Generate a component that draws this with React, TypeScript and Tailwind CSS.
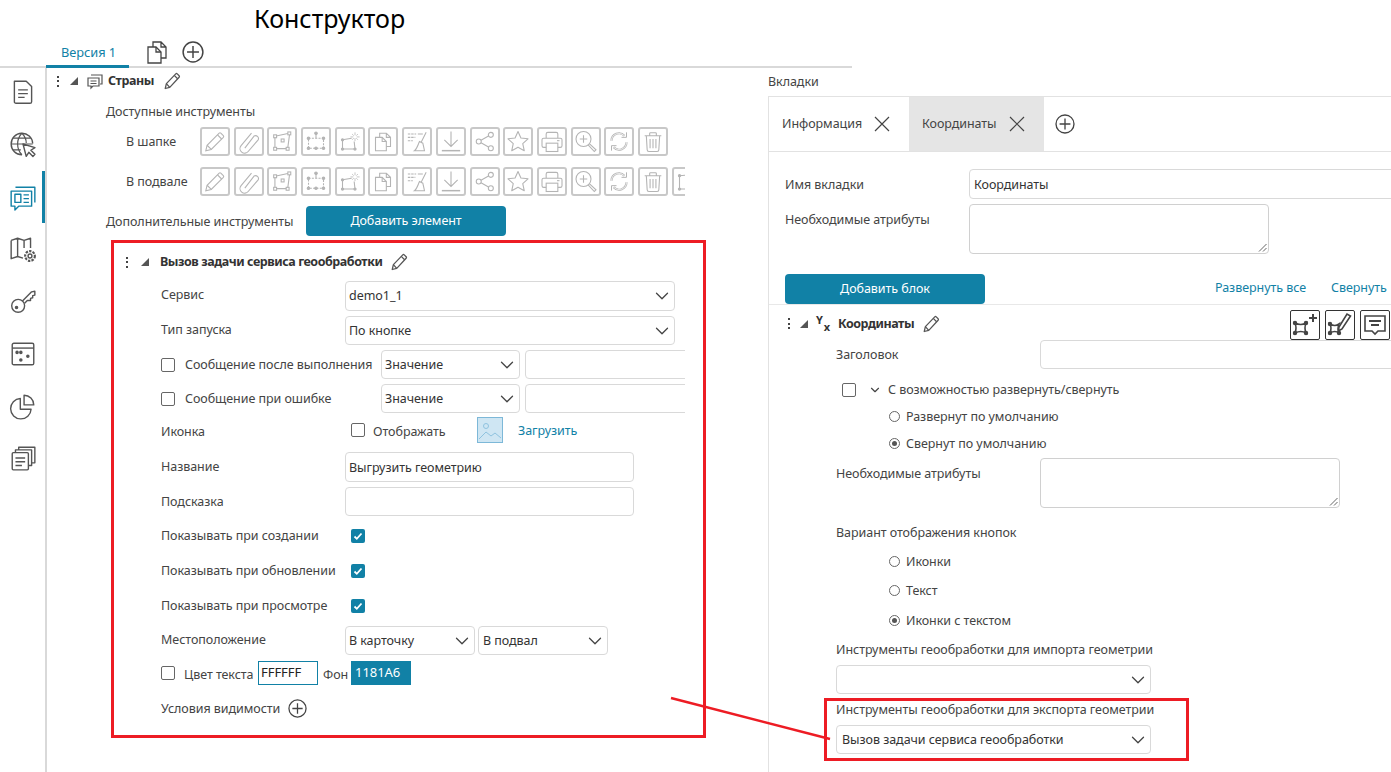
import { ChevronDown } from "lucide-react";
import type { ReactNode } from "react";

const FONT = "font-['Noto_Sans','Open_Sans',sans-serif]";

function Plus({ size = 18 }: { size?: number }) {
  return (
    <svg width={size} height={size} viewBox="0 0 24 24" fill="none" stroke="#444" strokeWidth="1.6" className="shrink-0">
      <circle cx="12" cy="12" r="10.8" />
      <path d="M12 5.5v13M5.5 12h13" />
    </svg>
  );
}

function Pencil({ size = 18, color = "#555" }: { size?: number; color?: string }) {
  return (
    <svg width={size} height={size} viewBox="0 0 24 24" fill="none" stroke={color} strokeWidth="1.7" strokeLinejoin="round" className="shrink-0">
      <path d="M3 22l1.5-6.500L17 2.500a1.500 1.500 0 0 1 2 0l2.500 2.500a1.500 1.500 0 0 1 0 2L9 20.500z" />
      <path d="M4.500 15.500L9 20.500M15 4.500l4.500 4.500" />
    </svg>
  );
}

function Dots() {
  return (
    <span className="flex flex-col gap-[2.500px] shrink-0">
      <i className="block w-[2px] h-[2px] bg-[#444]" />
      <i className="block w-[2px] h-[2px] bg-[#444]" />
      <i className="block w-[2px] h-[2px] bg-[#444]" />
    </span>
  );
}

function Tri() {
  return (
    <svg width="8" height="8" viewBox="0 0 8 8" className="block">
      <path d="M8 0v8H0z" fill="#555" />
    </svg>
  );
}

function Select({ text, className }: { text?: string; className: string }) {
  return (
    <div className={`flex items-center justify-between border border-[#d9d9d9] rounded-[4px] pr-[1px] bg-white shrink-0 ${className}`}>
      <span className="text-[#333] whitespace-nowrap">{text}</span>
      <ChevronDown size={22} strokeWidth={1.4} color="#444" />
    </div>
  );
}

function Check({ on }: { on?: boolean }) {
  if (on) {
    return (
      <span className="flex items-center justify-center w-[14px] h-[14px] rounded-[2px] bg-[#1181a6] shrink-0">
        <svg width="10" height="10" viewBox="0 0 10 10" fill="none" stroke="#fff" strokeWidth="1.8">
          <path d="M1.500 5.500l2.300 2.300 4.700-5.300" />
        </svg>
      </span>
    );
  }
  return <span className="block w-[14px] h-[14px] rounded-[2px] border border-[#666] bg-white shrink-0" />;
}

function Radio({ on, label, className }: { on?: boolean; label: string; className: string }) {
  return (
    <div className={`flex items-center pl-[120px] h-[20px] ${className}`}>
      <span className="flex items-center justify-center w-[11px] h-[11px] rounded-full border border-[#666] shrink-0">
        {on && <i className="block w-[5px] h-[5px] rounded-full bg-[#555]" />}
      </span>
      <span className="ml-[6px] mt-[2px]">{label}</span>
    </div>
  );
}

const g = "#b4b4b4";

const toolIcons: ReactNode[] = [
  <>
    <path d="M4 26l1.500-6.500L20 5a1.500 1.500 0 0 1 2 0l3 3a1.500 1.500 0 0 1 0 2L10.500 24.500z" />
    <path d="M5.500 19.500l5 5M18 7l5 5" />
  </>,
  <path d="M10 23L21 8.500a3.500 3.500 0 0 1 5 4.500L14 27a5.500 5.500 0 0 1-8.500-7L18 5" />,
  <>
    <path d="M8 8.500l14-3M24 7l-2 15M8 23.500h12M6.500 10v12" />
    <rect x="5" y="7" width="3.500" height="3.500" />
    <rect x="22" y="3.500" width="3.500" height="3.500" />
    <rect x="5" y="22" width="3.500" height="3.500" />
    <rect x="20" y="22" width="3.500" height="3.500" />
    <rect x="14" y="12" width="3.500" height="3.500" />
  </>,
  <>
    <rect x="6" y="11" width="18" height="12" strokeDasharray="2.500 1.500" />
    <path d="M15 11V6" />
    <circle cx="15" cy="5" r="1.500" fill={g} />
    <circle cx="6" cy="11" r="1.500" fill={g} />
    <circle cx="24" cy="11" r="1.500" fill={g} />
    <circle cx="6" cy="23" r="1.500" fill={g} />
    <circle cx="15" cy="23" r="1.500" fill={g} />
    <circle cx="24" cy="23" r="1.500" fill={g} />
  </>,
  <>
    <path d="M6 13l11-2M6 13v11M6 24h15l-1-9" />
    <circle cx="6" cy="13" r="1.300" fill={g} />
    <circle cx="6" cy="24" r="1.300" fill={g} />
    <circle cx="21" cy="24" r="1.300" fill={g} />
    <path d="M21 4v3.500M21 11v3.500M15.500 9.500H19M23 9.500h3.500M17.500 6l2 2M24.500 6l-2 2M17.500 13l2-2M24.500 13l-2-2" strokeWidth="0.900" />
  </>,
  <>
    <path d="M6 10h8l5 5v11H6z" />
    <path d="M14 10v5h5M11 10V5h8l5 5v11h-5M19 5v5h5" />
  </>,
  <>
    <path d="M4 6h10M4 10h9M4 14h6" strokeDasharray="3 1" />
    <path d="M16 6h6M26 4l-6 12" />
    <path d="M18 15l4 2 2 9H12c3-2 4-7 6-11z" />
  </>,
  <>
    <path d="M15 3v17M7 13l8 8 8-8" />
    <path d="M4 26h22" strokeWidth="1.800" />
  </>,
  <>
    <circle cx="7.500" cy="15" r="3" />
    <circle cx="22" cy="7" r="3" />
    <circle cx="22" cy="23" r="3" />
    <path d="M10.200 13.500l9-5M10.200 16.500l9 5" />
  </>,
  <path d="M15 3l3.500 7.800 8.500 1-6.300 5.700 1.800 8.500L15 21.800 7.500 26l1.800-8.500L3 11.800l8.500-1z" strokeLinejoin="round" />,
  <>
    <path d="M8 11V6a2 2 0 0 1 2-2h10a2 2 0 0 1 2 2v5M8 22H5a2 2 0 0 1-2-2v-7a2 2 0 0 1 2-2h20a2 2 0 0 1 2 2v7a2 2 0 0 1-2 2h-3" />
    <rect x="8" y="17" width="14" height="10" />
    <path d="M21 14h3" />
  </>,
  <>
    <circle cx="12" cy="12" r="9" />
    <path d="M12 7.500v9M7.500 12h9" />
    <path d="M19 17.500l8 7.500-2 2-7.500-8" />
  </>,
  <>
    <path d="M6 14a9 9 0 0 1 15.500-6M24 16a9 9 0 0 1-15.500 6" strokeWidth="2.600" />
    <path d="M6 14a9 9 0 0 1 15.500-6M24 16a9 9 0 0 1-15.500 6" stroke="#fff" strokeWidth="0.900" />
    <path d="M24 4v6h-6M6 26v-6h6" strokeWidth="1.200" />
  </>,
  <>
    <path d="M5 8h20M11 8V5.500a1 1 0 0 1 1-1h6a1 1 0 0 1 1 1V8M7 8l1 17a2 2 0 0 0 2 2h10a2 2 0 0 0 2-2l1-17M11.500 12v11M15 12v11M18.500 12v11" />
  </>,
  <>
    <path d="M6 8l12-1M6 8v16M6 24h16" />
    <circle cx="6" cy="8" r="1.300" fill={g} />
    <circle cx="6" cy="24" r="1.300" fill={g} />
  </>,
];

function ToolRow({ count, label, className }: { count: number; label: string; className: string }) {
  return (
    <div className={`flex items-center h-[29px] ${className}`}>
      <span className="w-[94px] pl-[20px] shrink-0">{label}</span>
      <div className="flex gap-[3.700px]">
        {toolIcons.slice(0, count).map((icon, i) => (
          <span key={i} className="flex items-center justify-center w-[30px] h-[29px] border-2 border-[#c8c8c8] rounded-[3px] shrink-0">
            <svg width="26" height="25" viewBox="0 0 30 30" fill="none" stroke={g} strokeWidth="1.300">
              {icon}
            </svg>
          </span>
        ))}
      </div>
    </div>
  );
}

function BoxIcon({ children }: { children: ReactNode }) {
  return (
    <span className="flex items-center justify-center w-[30px] h-[30px] border border-[#333] rounded-[2px] bg-white shrink-0">
      <svg width="28" height="28" viewBox="0 0 28 28" fill="none" stroke="#444" strokeWidth="1.600">
        {children}
      </svg>
    </span>
  );
}

function NavIcon({ children, className }: { children: ReactNode; className: string }) {
  return (
    <div className={`flex items-center justify-center h-[52.300px] ${className}`}>
      <svg width="28" height="28" viewBox="0 0 26 26" fill="none" stroke="currentColor" strokeWidth="1.300" strokeLinejoin="round">
        {children}
      </svg>
    </div>
  );
}

function Sidebar() {
  return (
    <aside className="w-[47px] shrink-0 border-r-2 border-[#d9d9d9] text-[#555]">
      <NavIcon className="-mt-[2px]">
        <path d="M5 3h11l5 5v14a1.500 1.500 0 0 1-1.500 1.500h-13A1.500 1.500 0 0 1 5 22z" />
        <path d="M8.500 11h9M8.500 14.500h9M8.500 18h6" />
      </NavIcon>
      <NavIcon className="">
        <path d="M12 23a10 10 0 1 1 10-10.500" />
        <path d="M2 13h20M12 3c-3 3-4 6-4 10s1 7 4 10M12 3c3 3 4 6 4 9M4 7.500h16M4 18.500h7" strokeWidth="1.100" />
        <path d="M13 13l3 11.500 2.400-3.800 3.800 3.800 1.900-1.900-3.800-3.800 3.800-2.400z" fill="#fff" />
      </NavIcon>
      <div className="relative">
        <NavIcon className="text-[#1181a6]">
          <path d="M6 4h18v14M2 7.500h19v14H9l-3.500 3.500v-3.500H2z" fill="#fff" />
          <rect x="5.500" y="10.500" width="5.500" height="7.500" />
          <path d="M13.500 11h5M13.500 14.500h5M13.500 18h5" />
        </NavIcon>
        <span className="absolute right-0 top-0 w-[3px] h-[52px] bg-[#1181a6]" />
      </div>
      <NavIcon className="">
        <path d="M2 5l6-2 6 2 6-2v9M2 5v17l6-2 5 1.500M8 3v17M14 5v7" />
        <circle cx="19.500" cy="19.500" r="1.800" />
        <circle cx="19.500" cy="19.500" r="4.500" strokeDasharray="2.200 1.100" strokeWidth="2" />
      </NavIcon>
      <NavIcon className="">
        <circle cx="8.500" cy="17.500" r="6" />
        <circle cx="7" cy="19" r="1" fill="currentColor" />
        <path d="M12.500 13L21 4.500l3-.5v3.500l-2 .5v2l-2 .5v2h-3l-2.500 2.500" />
      </NavIcon>
      <NavIcon className="">
        <rect x="3" y="3" width="20" height="20" rx="1.500" />
        <path d="M3 7.500h20" />
        <circle cx="7.500" cy="11.500" r="1" fill="currentColor" />
        <circle cx="11" cy="11.500" r="1" fill="currentColor" />
        <circle cx="17.500" cy="15" r="1" fill="currentColor" />
        <circle cx="11" cy="18.500" r="1" fill="currentColor" />
      </NavIcon>
      <NavIcon className="">
        <path d="M10.500 6a9.500 9.500 0 1 0 10 10h-10z" />
        <path d="M14 3a9 9 0 0 1 9 9h-9z" />
      </NavIcon>
      <NavIcon className="">
        <rect x="3" y="8" width="15" height="16" rx="1" />
        <path d="M6 13h9M6 16.500h9M6 20h6" />
        <path d="M6 8V5.500h15V20h-3M9 5.500V3h15v14.500h-3" />
      </NavIcon>
    </aside>
  );
}

function LeftPane() {
  return (
    <section className="w-[638px] shrink-0 overflow-hidden">
      <div className="flex items-center h-[26px] pl-[10px]">
        <Dots />
        <span className="ml-[11px]"><Tri /></span>
        <svg className="ml-[8px] shrink-0" width="18" height="18" viewBox="0 0 18 18" fill="none" stroke="#555" strokeWidth="1.200">
          <path d="M5 3h11v9h-2M2 6h11v8H7l-2 2v-2H2z" fill="#fff" />
          <path d="M4.500 9h6M4.500 11.500h6" />
        </svg>
        <span className="ml-[4px] font-bold text-[#333] tracking-[-0.450px]">Страны</span>
        <span className="ml-[9px]"><Pencil /></span>
      </div>
      <div className="flex items-center h-[26px] mt-[4px] pt-[2px] pl-[59px]">Доступные инструменты</div>
      <div className="pl-[59px]">
        <ToolRow count={14} label="В шапке" className="mt-[3px]" />
        <ToolRow count={15} label="В подвале" className="mt-[11px]" />
        <div className="flex items-center h-[30px] mt-[10px]">
          <span className="w-[200px] shrink-0 mt-[2px]">Дополнительные инструменты</span>
          <button className="w-[200px] h-[30px] bg-[#1181a6] text-white rounded-[4px]">Добавить элемент</button>
        </div>
      </div>
      <div className="flex items-center h-[26px] mt-[12px] pt-[2px] pl-[79px]">
        <Dots />
        <span className="ml-[13px]"><Tri /></span>
        <span className="ml-[11px] font-bold text-[#333] tracking-[-0.450px]">Вызов задачи сервиса геообработки</span>
        <span className="ml-[8px]"><Pencil /></span>
      </div>
      <div className="pl-[114px]">
        <div className="flex items-center h-[30px] mt-[7px]">
          <span className="w-[184px] shrink-0 -mt-[2px]">Сервис</span>
          <Select text="demo1_1" className="w-[330px] h-[30px] pl-[3px]" />
        </div>
        <div className="flex items-center h-[29px] mt-[5px]">
          <span className="w-[184px] shrink-0 -mt-[2px]">Тип запуска</span>
          <Select text="По кнопке" className="w-[330px] h-[29px] pl-[3px]" />
        </div>
        <div className="flex items-center h-[29px] mt-[5px]">
          <Check />
          <span className="ml-[10px] w-[196px] shrink-0 whitespace-nowrap">Сообщение после выполнения</span>
          <Select text="Значение" className="w-[139px] h-[29px] pl-[3px]" />
          <span className="block ml-[5px] w-[200px] h-[29px] border border-[#d9d9d9] rounded-[4px] shrink-0" />
        </div>
        <div className="flex items-center h-[29px] mt-[5px]">
          <Check />
          <span className="ml-[10px] w-[196px] shrink-0">Сообщение при ошибке</span>
          <Select text="Значение" className="w-[139px] h-[29px] pl-[3px]" />
          <span className="block ml-[5px] w-[200px] h-[29px] border border-[#d9d9d9] rounded-[4px] shrink-0" />
        </div>
        <div className="flex items-center h-[26px] mt-[4px]">
          <span className="w-[190px] shrink-0 mt-[3px]">Иконка</span>
          <Check />
          <span className="ml-[8px] w-[104px] shrink-0 mt-[3px]">Отображать</span>
          <svg width="26" height="26" viewBox="0 0 26 26" className="shrink-0">
            <rect x="0.500" y="0.500" width="25" height="25" fill="#cfe6f3" stroke="#7db8d8" />
            <circle cx="9" cy="9" r="2.500" fill="none" stroke="#8fc3df" />
            <path d="M2 22l7-7 5 4 4-3 6 5" fill="none" stroke="#8fc3df" />
          </svg>
          <span className="ml-[15px] text-[#1181a6] mt-[2px]">Загрузить</span>
        </div>
        <div className="flex items-center h-[30px] mt-[9px]">
          <span className="w-[184px] shrink-0">Название</span>
          <span className="flex items-center w-[289px] h-[30px] pl-[3px] pt-[2px] border border-[#d9d9d9] rounded-[4px] text-[#333]">Выгрузить геометрию</span>
        </div>
        <div className="flex items-center h-[29px] mt-[5px]">
          <span className="w-[184px] shrink-0">Подсказка</span>
          <span className="block w-[289px] h-[29px] border border-[#d9d9d9] rounded-[4px]" />
        </div>
        <div className="flex items-center h-[20px] mt-[10px]">
          <span className="w-[190px] shrink-0">Показывать при создании</span>
          <Check on />
        </div>
        <div className="flex items-center h-[20px] mt-[15px]">
          <span className="w-[190px] shrink-0">Показывать при обновлении</span>
          <Check on />
        </div>
        <div className="flex items-center h-[20px] mt-[15px]">
          <span className="w-[190px] shrink-0">Показывать при просмотре</span>
          <Check on />
        </div>
        <div className="flex items-center h-[29px] mt-[10px]">
          <span className="w-[184px] shrink-0 -mt-[2px]">Местоположение</span>
          <Select text="В карточку" className="w-[130px] h-[29px] pl-[3px]" />
          <Select text="В подвал" className="ml-[3px] w-[130px] h-[29px] pl-[4px]" />
        </div>
        <div className="flex items-center h-[24px] mt-[6px]">
          <Check />
          <span className="ml-[9px] w-[74px] shrink-0 mt-[3px]">Цвет текста</span>
          <span className="flex items-start pl-[2px] w-[60px] h-[24px] border border-[#1181a6] text-[#222] text-[13px] leading-[20px]">FFFFFF</span>
          <span className="ml-[5px] w-[28px] shrink-0 mt-[3px]">Фон</span>
          <span className="flex items-start pl-[4px] w-[60px] h-[24px] bg-[#1181a6] text-white text-[13px] leading-[22px]">1181A6</span>
        </div>
        <div className="flex items-center h-[20px] mt-[13px]">
          <span className="mt-[2px]">Условия видимости</span>
          <span className="ml-[8px]"><Plus size={19} /></span>
        </div>
      </div>
    </section>
  );
}

function CloseX({ className }: { className: string }) {
  return (
    <svg className={`shrink-0 ${className}`} width="16" height="16" viewBox="0 0 16 16" fill="none" stroke="#444" strokeWidth="1.200">
      <path d="M1 1l14 14M15 1L1 15" />
    </svg>
  );
}

function Textarea({ className }: { className: string }) {
  return (
    <span className={`relative block border border-[#d0d0d0] rounded-[4px] shrink-0 ${className}`}>
      <svg className="absolute right-[1px] bottom-[1px]" width="9" height="9" viewBox="0 0 9 9" fill="none" stroke="#666">
        <path d="M1 8.500L8.500 1M5 8.500L8.500 5" />
      </svg>
    </span>
  );
}

function RightPane() {
  return (
    <section className="flex-1 min-w-0 overflow-hidden ml-[83px]">
      <div className="flex items-center h-[28px]">Вкладки</div>
      <div className="border-l border-[#e2e2e2] h-[676px]">
        <div className="flex h-[56px] border-y border-[#e2e2e2]">
          <div className="flex items-center w-[140px] pl-[13px] shrink-0">
            <span className="w-[79px] shrink-0 whitespace-nowrap">Информация</span>
            <CloseX className="ml-[13px]" />
          </div>
          <div className="flex items-center w-[135px] pl-[13px] bg-[#e5e5e5] shrink-0">
            <span className="w-[75px] shrink-0 whitespace-nowrap">Координаты</span>
            <CloseX className="ml-[12px]" />
          </div>
          <span className="flex items-center ml-[11px]"><Plus size={20} /></span>
        </div>
        <div className="flex items-center h-[30px] mt-[17px] pl-[16px]">
          <span className="w-[184px] shrink-0 mt-[2px]">Имя вкладки</span>
          <span className="flex items-center h-[30px] w-[500px] pl-[4px] pt-[2px] border border-[#d9d9d9] rounded-[4px] shrink-0 text-[#333]">Координаты</span>
        </div>
        <div className="flex items-start mt-[5px] pl-[16px]">
          <span className="w-[184px] shrink-0 mt-[7px]">Необходимые атрибуты</span>
          <Textarea className="w-[300px] h-[50px]" />
        </div>
        <div className="flex items-center h-[31px] mt-[20px] pl-[16px] border-b border-[#e8e8e8]">
          <button className="w-[200px] h-[30px] bg-[#1181a6] text-white rounded-[4px] shrink-0">Добавить блок</button>
          <span className="ml-[230px] text-[#1181a6] whitespace-nowrap shrink-0 -mt-[2px]">Развернуть все</span>
          <span className="ml-[25px] text-[#1181a6] whitespace-nowrap shrink-0 -mt-[2px]">Свернуть</span>
        </div>
        <div className="flex items-center h-[35px] pt-[2px] pl-[19px]">
          <Dots />
          <span className="ml-[10px]"><Tri /></span>
          <span className="ml-[8px] flex w-[16px] font-bold text-[#333] text-[11px] leading-none shrink-0">
            <span className="relative -top-[4px]">Y</span>
            <span className="relative top-[3px] ml-[1px]">x</span>
          </span>
          <span className="ml-[6px] font-bold text-[#333] tracking-[-0.450px]">Координаты</span>
          <span className="ml-[8px]"><Pencil /></span>
          <div className="ml-auto self-end flex gap-[5px] pr-[1px]">
            <BoxIcon>
              <path d="M4 12q6 3 11 0-2 5 0 10-5-3-11 0 2-5 0-10z" />
              <circle cx="4" cy="12" r="1.400" fill="#444" />
              <circle cx="15" cy="12" r="1.400" fill="#444" />
              <circle cx="4" cy="22" r="1.400" fill="#444" />
              <circle cx="15" cy="22" r="1.400" fill="#444" />
              <path d="M22 3v8M18 7h8" strokeWidth="2" />
            </BoxIcon>
            <BoxIcon>
              <path d="M4 13q5 3 9 0-2 5 0 9-4-3-9 0 2-5 0-9z" />
              <circle cx="4" cy="13" r="1.400" fill="#444" />
              <circle cx="4" cy="22" r="1.400" fill="#444" />
              <circle cx="13" cy="22" r="1.400" fill="#444" />
              <path d="M13 16L21 3l3.500 2L16 18l-3.500 2z" fill="#fff" />
            </BoxIcon>
            <BoxIcon>
              <path d="M4 5h20v15h-7l-3 3-3-3H4z" />
              <path d="M8 10h12M10 14h8" strokeWidth="2" />
            </BoxIcon>
          </div>
        </div>
        <div className="flex items-center h-[29px] pl-[67px]">
          <span className="w-[204px] shrink-0">Заголовок</span>
          <span className="block h-[29px] w-[400px] border border-[#d9d9d9] rounded-[4px] shrink-0" />
        </div>
        <div className="flex items-center h-[20px] mt-[11px] pl-[73px]">
          <Check />
          <ChevronDown className="ml-[12px] shrink-0" size={14} strokeWidth={2} color="#444" />
          <span className="ml-[6px]">С возможностью развернуть/свернуть</span>
        </div>
        <Radio label="Развернут по умолчанию" className="mt-[6px]" />
        <Radio on label="Свернут по умолчанию" className="mt-[7px]" />
        <div className="flex items-start mt-[5px] pl-[67px]">
          <span className="w-[204px] shrink-0 mt-[7px]">Необходимые атрибуты</span>
          <Textarea className="w-[300px] h-[50px]" />
        </div>
        <div className="flex items-center h-[20px] mt-[14px] pt-[2px] pl-[67px]">Вариант отображения кнопок</div>
        <Radio label="Иконки" className="mt-[9px]" />
        <Radio label="Текст" className="mt-[9px]" />
        <Radio on label="Иконки с текстом" className="mt-[10px]" />
        <div className="flex items-center h-[20px] mt-[9px] pt-[2px] pl-[67px]">Инструменты геообработки для импорта геометрии</div>
        <div className="pl-[67px] mt-[6px]">
          <Select className="w-[315px] h-[29px]" />
        </div>
        <div className="flex items-center h-[20px] mt-[5px] pt-[2px] pl-[67px]">Инструменты геообработки для экспорта геометрии</div>
        <div className="pl-[67px] mt-[6px]">
          <Select text="Вызов задачи сервиса геообработки" className="w-[315px] h-[29px] pl-[5px]" />
        </div>
      </div>
    </section>
  );
}

export default function App() {
  return (
    <div className={`relative w-[1391px] h-[772px] overflow-hidden bg-white text-[#444] text-[12.500px] tracking-[-0.050px] leading-[18px] ${FONT}`}>
      <header className="h-[36px] pl-[254px] pt-[2px] text-[25px] tracking-normal leading-[32px] text-black">Конструктор</header>
      <div className="flex items-end w-[806px] h-[30px] pl-[46px] border-b-2 border-[#d9d9d9] box-content">
        <div className="w-[83px] h-[30px] -mb-[2px] pl-[15px] pt-[5px] border-b-[3px] border-[#1181a6] text-[#1181a6] text-[12.800px]">Версия 1</div>
        <svg className="ml-[17px] mb-[2px]" width="22" height="24" viewBox="0 0 22 24" fill="none" stroke="#444" strokeWidth="1.300">
          <path d="M2 7h8l5 5v11H2z" />
          <path d="M10 7v5h5M7 7V2h8l5 5v11h-5M15 2v5h5" />
        </svg>
        <span className="ml-[14px] mb-[3px]"><Plus size={22} /></span>
      </div>
      <main className="flex h-[704px]">
        <Sidebar />
        <LeftPane />
        <RightPane />
      </main>

      <span className="absolute left-[111px] top-[240px] w-[595px] h-[498px] border-[3px] border-[#ed1c24]" />
      <span className="absolute left-[824px] top-[698px] w-[365px] h-[63px] border-[3px] border-[#ed1c24]" />
      <svg className="absolute left-0 top-0" width="1391" height="772" fill="none" stroke="#ed1c24" strokeWidth="2.500">
        <path d="M671 698L830 739" />
      </svg>
    </div>
  );
}
